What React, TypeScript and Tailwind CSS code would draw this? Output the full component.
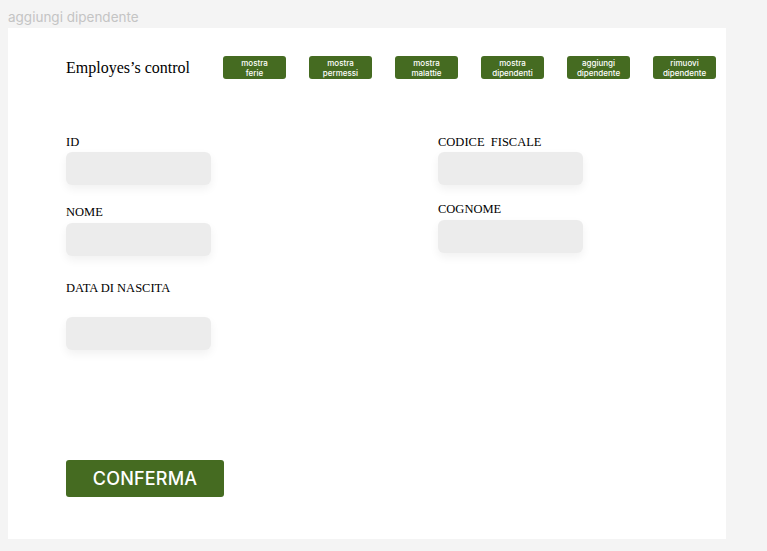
const navButtons = [
  ["mostra", "ferie"],
  ["mostra", "permessi"],
  ["mostra", "malattie"],
  ["mostra", "dipendenti"],
  ["aggiungi", "dipendente"],
  ["rimuovi", "dipendente"],
];

const serif = "font-['Liberation_Serif',serif]";

function Field({ label, labelGap, top }: { label: string; labelGap: string; top: string }) {
  return (
    <div className={`flex flex-col ${top}`}>
      <span className={`${serif} whitespace-pre text-[12.5px] leading-[14px] text-black`}>{label}</span>
      <div
        className={`${labelGap} h-[33px] w-[145px] rounded-[6px] bg-[#ececec] shadow-[0_4px_10px_rgba(0,0,0,0.06)]`}
      />
    </div>
  );
}

export default function App() {
  return (
    <div className="h-[551px] w-full overflow-hidden bg-[#f4f4f4] font-['Inter',sans-serif]">
      <p className="px-2 pt-[8px] text-[13.5px] leading-[18px] text-[#c4c4c4]">aggiungi dipendente</p>
      <div className="ml-2 mt-[2px] h-[511px] w-[718px] bg-white pl-[58px]">
        <div className="flex items-center pt-[28px]">
          <h1 className={`${serif} w-[157px] text-[16px] leading-[23px] text-black`}>
            Employes’s control
          </h1>
          <div className="flex gap-[23px]">
            {navButtons.map(([a, b]) => (
              <button
                key={a + b}
                className="flex h-[23px] w-[63px] flex-col items-center justify-center rounded-[3px] bg-[#456b21] text-[8px] font-medium leading-[10px] text-white"
              >
                <span>{a}</span>
                <span>{b}</span>
              </button>
            ))}
          </div>
        </div>

        <div className="mt-[56px] flex">
          <div className="flex w-[372px] flex-col">
            <Field label="ID" labelGap="mt-[3px]" top="" />
            <Field label="NOME" labelGap="mt-[4px]" top="mt-[20px]" />
            <Field label="DATA DI NASCITA" labelGap="mt-[22px]" top="mt-[25px]" />
          </div>
          <div className="flex flex-col">
            <Field label="CODICE  FISCALE" labelGap="mt-[3px]" top="" />
            <Field label="COGNOME" labelGap="mt-[4px]" top="mt-[17px]" />
          </div>
        </div>

        <button className="mt-[110px] flex h-[37px] w-[158px] items-center justify-center rounded-[3px] bg-[#456b21] text-[18px] font-medium tracking-[0.2px] text-white">
          CONFERMA
        </button>
      </div>
    </div>
  );
}
